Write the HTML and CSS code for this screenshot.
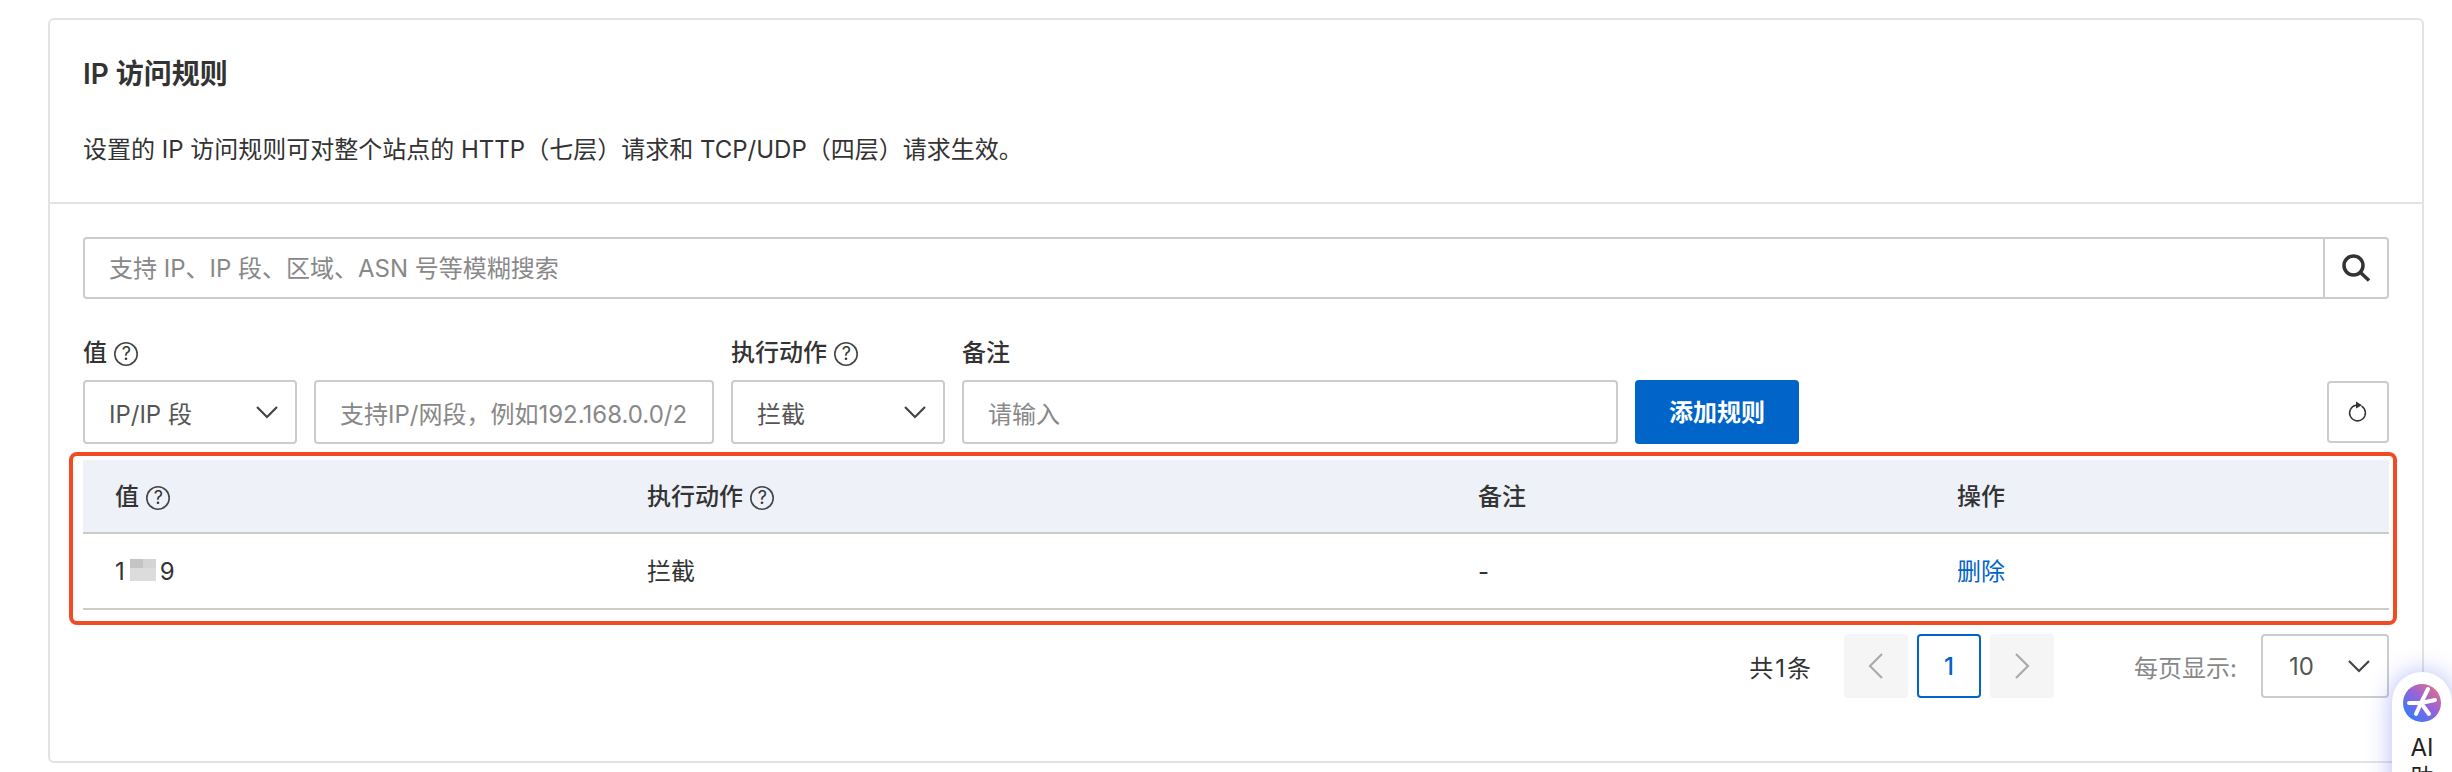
FILE: index.html
```html
<!DOCTYPE html>
<html>
  <head>
    <title>IP 访问规则</title>
    <link rel="stylesheet" href="styles.css">
  </head>

  <body>
    <div class="card">
      <div class="card_head">
        <h4 class="title">IP 访问规则</h4>
        <p class="desc">设置的 IP 访问规则可对整个站点的 HTTP（七层）请求和 TCP/UDP（四层）请求生效。</p>
      </div>

      <div class="card_body">
        <div class="search">
          <div class="search_text">支持 IP、IP 段、区域、ASN 号等模糊搜索</div>
          <div class="search_btn">
            <svg width="30" height="30" viewBox="0 0 30 30" fill="none" stroke="#333" stroke-width="3.5"><circle cx="12.5" cy="12.5" r="9.5"/><path d="M19.5 19.5l8.5 8"/></svg>
          </div>
        </div>

        <div class="form_row">
          <div class="form_col">
            <div class="label">值 <span class="help">?</span></div>
            <div class="fields">
              <div class="select select_type">IP/IP 段
                <svg class="chevron" width="24" height="14" viewBox="0 0 24 14" fill="none" stroke="#444" stroke-width="2.2"><path d="M2 2l10 10L22 2"/></svg>
              </div>
              <div class="input input_ip">支持IP/网段，例如192.168.0.0/2</div>
            </div>
          </div>
          <div class="form_col">
            <div class="label">执行动作 <span class="help">?</span></div>
            <div class="select select_type">拦截
              <svg class="chevron" width="24" height="14" viewBox="0 0 24 14" fill="none" stroke="#444" stroke-width="2.2"><path d="M2 2l10 10L22 2"/></svg>
            </div>
          </div>
          <div class="form_col">
            <div class="label">备注</div>
            <div class="input input_note">请输入</div>
          </div>
          <div class="add_btn">添加规则</div>
          <div class="refresh_btn">
            <svg width="22" height="24" viewBox="0 0 22 24" fill="none" stroke="#333" stroke-width="1.5"><path d="M14.6 6.2A7.9 7.9 0 1 1 9 5.2"/><path d="M9 1.6l6 3.6-6 3.4z" fill="#333" stroke="none"/></svg>
          </div>
        </div>

        <div class="table_wrap">
          <table class="rules">
            <thead>
              <tr>
                <th class="col_value">值 <span class="help">?</span></th>
                <th class="col_action">执行动作 <span class="help">?</span></th>
                <th class="col_note">备注</th>
                <th>操作</th>
              </tr>
            </thead>
            <tbody>
              <tr>
                <td class="cell_latin">1<span class="masked"></span>9</td>
                <td>拦截</td>
                <td class="cell_latin">-</td>
                <td><a class="link">删除</a></td>
              </tr>
            </tbody>
          </table>
        </div>

        <div class="pager">
          <span class="total">共1条</span>
          <div class="page_btns">
            <div class="page_btn disabled">
              <svg width="18" height="28" viewBox="0 0 18 28" fill="none" stroke="#aaa" stroke-width="2.2"><path d="M15 2L3 14l12 12"/></svg>
            </div>
            <div class="page_btn current">1</div>
            <div class="page_btn disabled">
              <svg width="18" height="28" viewBox="0 0 18 28" fill="none" stroke="#aaa" stroke-width="2.2"><path d="M3 2l12 12L3 26"/></svg>
            </div>
          </div>
          <span class="per_page">每页显示:</span>
          <div class="select select_size">10
            <svg class="chevron" width="24" height="14" viewBox="0 0 24 14" fill="none" stroke="#444" stroke-width="2.2"><path d="M2 2l10 10L22 2"/></svg>
          </div>
        </div>
      </div>
    </div>

    <div class="ai_pill">
      <svg width="38" height="38" viewBox="0 0 38 38">
        <defs>
          <linearGradient id="ai_grad" x1="0.9" y1="0.15" x2="0.25" y2="0.9">
            <stop offset="0" stop-color="#d8708f"/>
            <stop offset="0.45" stop-color="#9a62d8"/>
            <stop offset="1" stop-color="#3f78f5"/>
          </linearGradient>
        </defs>
        <circle cx="19" cy="19" r="19" fill="url(#ai_grad)"/>
        <path d="M18 19L25 5M18 19L6 19M18 19L32 16M18 19L26 30M18 19L13 30" stroke="#fff" stroke-width="4" stroke-linecap="round"/>
      </svg>
      <div class="ai_text">AI助手</div>
    </div>
  </body>
</html>
```

FILE: styles.css
```css
* {
  padding: 0;
  margin: 0;
  box-sizing: border-box;
  font-family: Inter, "Noto Sans CJK SC", sans-serif;
}

body {
  position: relative;
  height: 772px;
  padding: 18px 28px 0 48px;
  overflow: hidden;
  background: #fff;
  color: #333;
  font-size: 24px;
}

.card {
  height: 745px;
  border: 2px solid #e3e3e3;
  border-radius: 6px;
}

.card_head {
  height: 184px;
  padding: 33px 33px 0;
  border-bottom: 2px solid #e3e3e3;
}

.title {
  font-size: 28px;
  line-height: 42px;
  font-weight: 600;
}

.desc {
  margin-top: 37px;
  line-height: 36px;
}

.card_body {
  padding: 33px 33px 0 33px;
}

.search {
  display: flex;
  height: 62px;
  border: 2px solid #ccc;
  border-radius: 4px;
}

.search_text {
  flex: 1;
  padding-left: 24px;
  line-height: 60px;
  color: #888;
}

.search_btn {
  display: flex;
  align-items: center;
  justify-content: center;
  width: 64px;
  border-left: 2px solid #ccc;
}

.form_row {
  display: flex;
  align-items: flex-end;
  gap: 17px;
  margin-top: 37px;
}

.label {
  height: 34px;
  margin-bottom: 10px;
  line-height: 34px;
  font-weight: 500;
}

.help {
  display: inline-flex;
  align-items: center;
  justify-content: center;
  width: 24px;
  height: 24px;
  margin-left: 1px;
  border-radius: 50%;
  box-shadow: inset 0 0 0 1.6px #444;
  font-size: 18px;
  font-weight: 400;
  vertical-align: 1px;
}

.fields {
  display: flex;
  gap: 17px;
}

.select,
.input {
  display: flex;
  align-items: center;
  justify-content: space-between;
  height: 64px;
  padding: 0 16px 0 24px;
  border: 2px solid #ccc;
  border-radius: 4px;
  white-space: nowrap;
}

.select_type {
  width: 214px;
  color: #555;
}

.input {
  color: #888;
}

.input_ip {
  width: 400px;
}

.input_note {
  width: 656px;
}

.add_btn {
  width: 164px;
  height: 64px;
  background: #0064c8;
  border-radius: 4px;
  color: #fff;
  font-weight: 600;
  line-height: 66px;
  text-align: center;
}

.refresh_btn {
  display: flex;
  align-items: center;
  justify-content: center;
  width: 62px;
  height: 62px;
  margin-left: auto;
  margin-bottom: 1px;
  border: 2px solid #ccc;
  border-radius: 4px;
}

.table_wrap {
  margin: 8px -8px 0 -14px;
  padding: 4px 4px 11px 10px;
  border: 4px solid #f24a25;
  border-radius: 8px;
}

.rules {
  width: 100%;
  border-collapse: separate;
  border-spacing: 0;
  table-layout: fixed;
}

.rules th,
.rules td {
  padding: 0 0 3px 32px;
  text-align: left;
}

.rules th {
  height: 74px;
  background: #eef1f8;
  border-bottom: 2px solid #ccc;
  font-weight: 500;
}

.rules td {
  height: 76px;
  border-bottom: 2px solid #ccc;
}

.rules td.cell_latin {
  padding: 1px 0 0 32px;
}

.col_value {
  width: 532px;
}

.col_action {
  width: 831px;
}

.col_note {
  width: 479px;
}

.masked {
  display: inline-block;
  width: 26px;
  height: 22px;
  margin: -4px 4px -4px 5px;
  background: linear-gradient(to right, #c4c4c4 50%, #d4d4d4 50%) top / 100% 9px no-repeat, #dcdcdc;
  vertical-align: 3px;
}

.link {
  color: #0064c8;
}

.pager {
  display: flex;
  align-items: center;
  justify-content: flex-end;
  height: 64px;
  margin-top: 9px;
}

.total {
  letter-spacing: 2px;
}

.page_btns {
  display: flex;
  gap: 9px;
  margin: 0 80px 0 31px;
}

.page_btn {
  display: flex;
  align-items: center;
  justify-content: center;
  width: 64px;
  height: 64px;
  border-radius: 4px;
}

.page_btn.disabled {
  background: #f5f5f5;
}

.page_btn.current {
  border: 2px solid #0064c8;
  color: #0064c8;
  font-weight: 500;
}

.per_page {
  margin-right: 24px;
  color: #888;
}

.select_size {
  width: 128px;
  padding-left: 26px;
  color: #555;
}

.ai_pill {
  position: absolute;
  top: 672px;
  left: 2392px;
  width: 60px;
  height: 200px;
  padding: 12px 10px 0 10px;
  background: #fff;
  border-radius: 30px;
  box-shadow: 0 0 24px rgba(70, 80, 235, 0.4);
  text-align: center;
}

.ai_text {
  margin-top: 5px;
  font-size: 24px;
  line-height: 30px;
  color: #222;
}
```
